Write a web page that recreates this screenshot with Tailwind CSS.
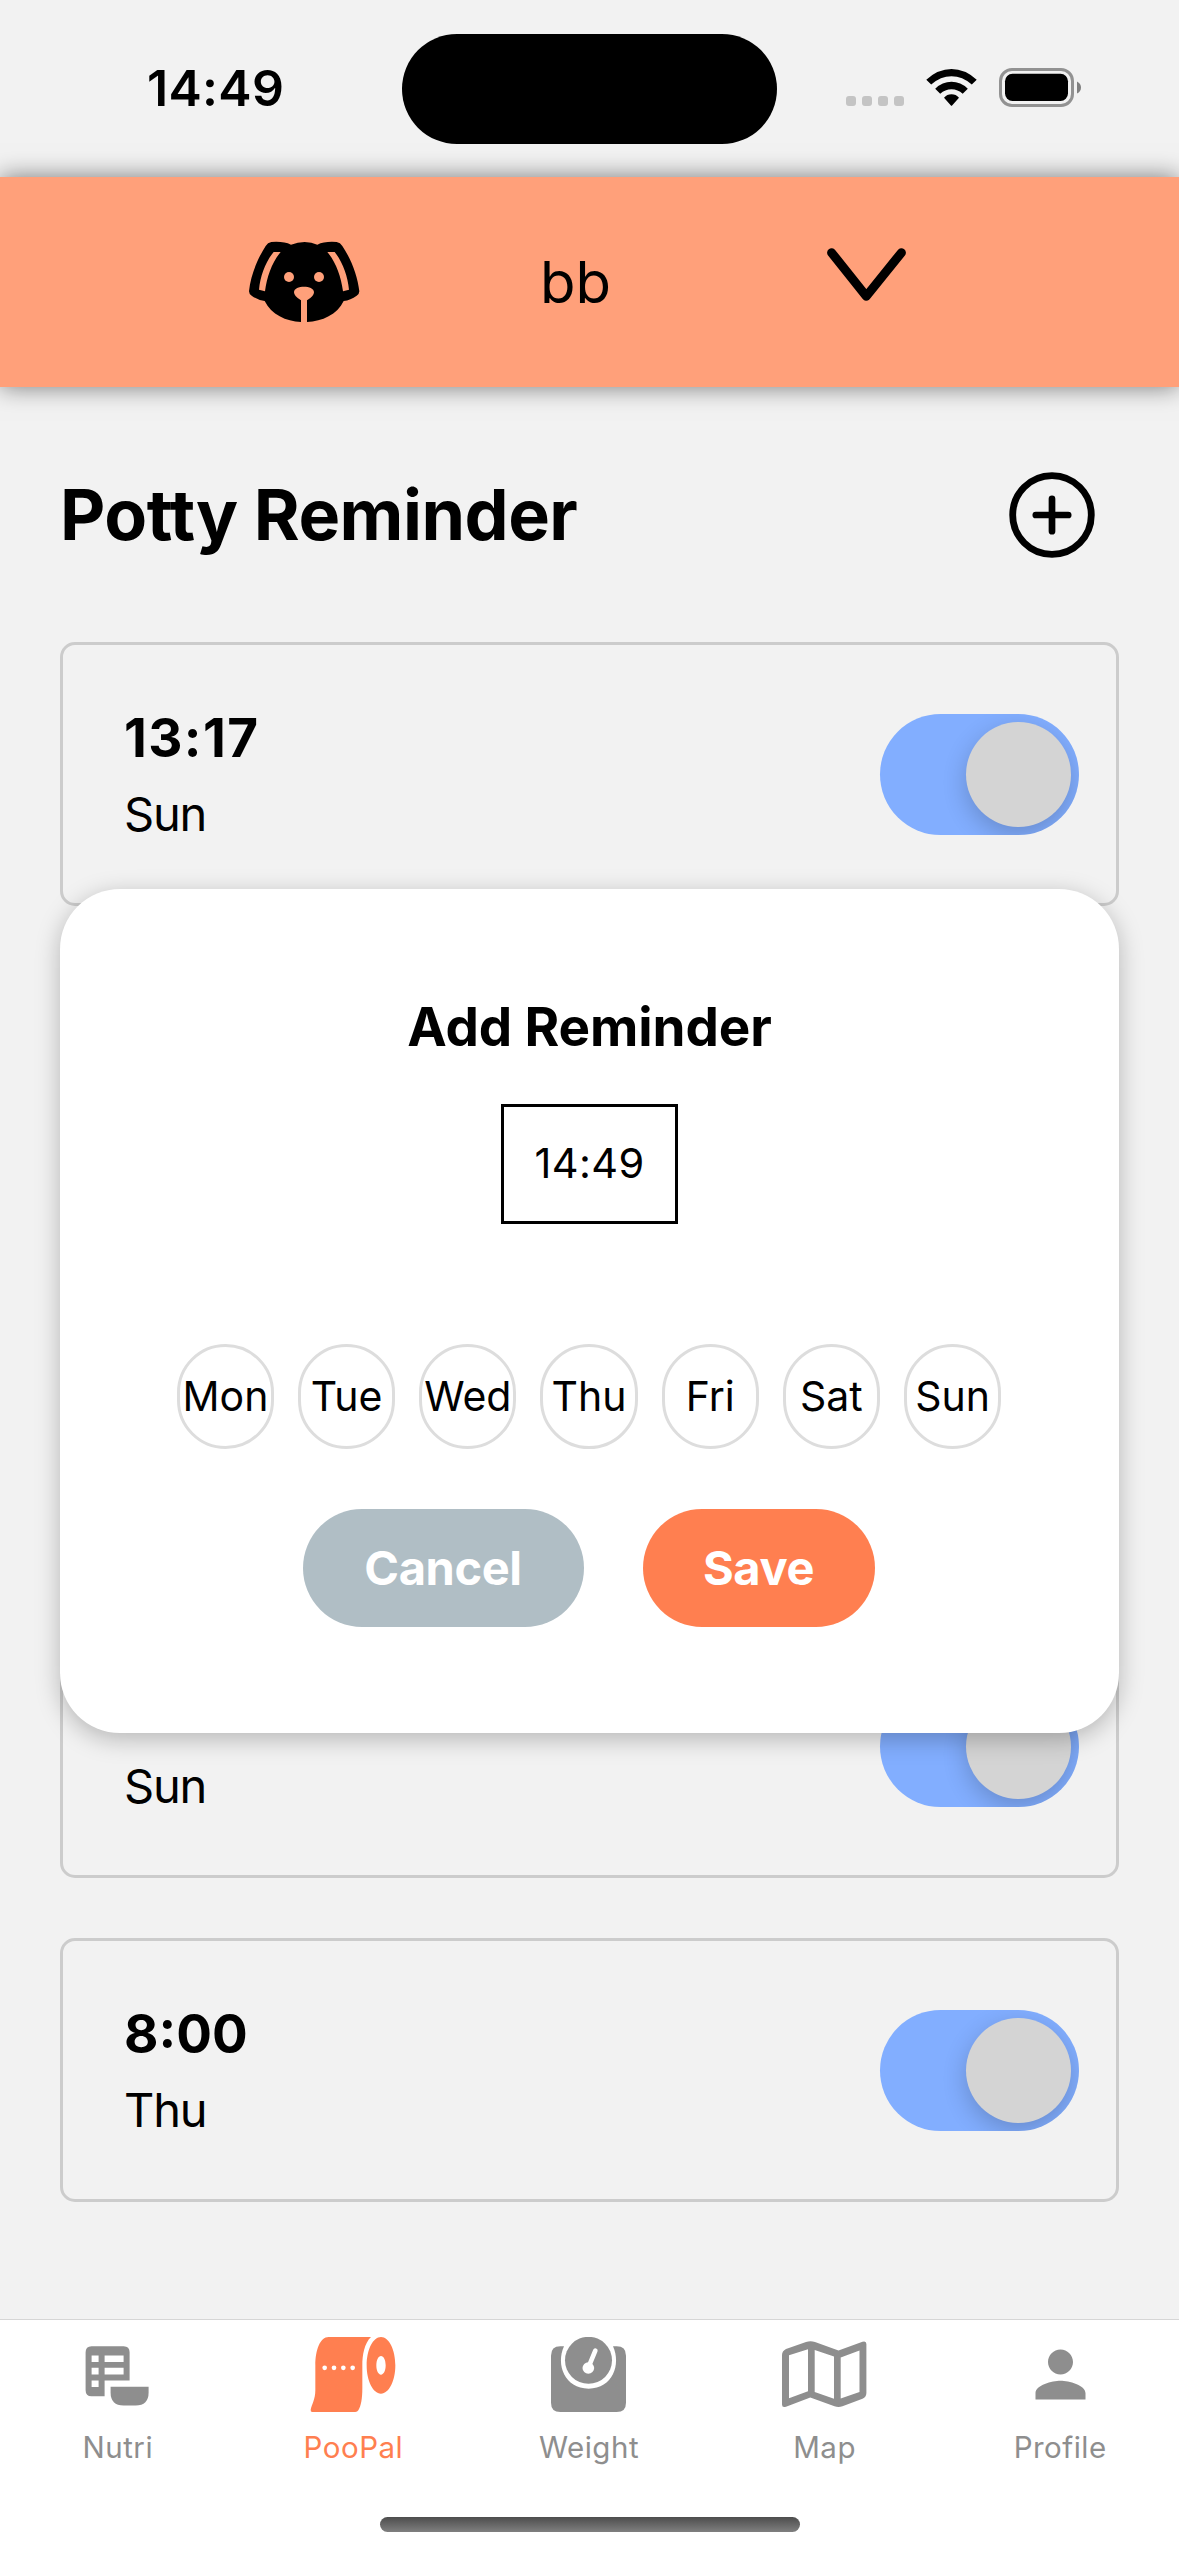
<!DOCTYPE html>
<html lang="en">
<head>
<meta charset="utf-8">
<title>Potty Reminder</title>
<script src="https://cdn.jsdelivr.net/npm/@tailwindcss/browser@4"></script>
</head>
<body class="bg-[#f2f2f2]">
<div class="relative flex h-[2556px] w-[1179px] flex-col overflow-hidden bg-[#f2f2f2] font-['Inter',sans-serif] text-black">

  <!-- Status bar -->
  <div class="flex h-[177px] shrink-0 items-start">
    <div class="ml-[147px] mt-[63px] w-[255px] text-[50px] leading-[50px] font-semibold tracking-[0.3px]">14:49</div>
    <div class="mt-[34px] h-[110px] w-[375px] rounded-full bg-black"></div>
    <svg class="ml-[69px] mt-[64px]" width="240" height="48" viewBox="846 64 240 48">
      <g fill="#c4c4c4"><rect x="846" y="96" width="10" height="10" rx="3"/><rect x="862" y="96" width="10" height="10" rx="3"/><rect x="878" y="96" width="10" height="10" rx="3"/><rect x="894" y="96" width="10" height="10" rx="3"/></g>
      <path d="M926.3 79.7Q938 69 951.500 69T976.700 79.700L971.800 84.600Q962.500 76.300 951.500 76.300T931.200 84.600Z"/>
      <path d="M935.200 88.700Q942.300 81.800 951.500 81.800T967.800 88.700L962.700 93.800Q957.900 89.200 951.500 89.200T940.200 93.800Z"/>
      <path d="M944 97.700Q947 94.300 951.500 94.300T959 97.700L952.300 105.300Q951.500 106.300 950.700 105.300Z"/>
      <rect x="1000.500" y="69.500" width="72" height="36" rx="11.500" fill="none" stroke="#929292" stroke-width="3"/>
      <rect x="1005" y="73.700" width="63" height="27.300" rx="7.500"/>
      <path d="M1077 81.500Q1081 83.500 1081 87.500T1077 93.500Z" fill="#808080"/>
    </svg>
  </div>

  <!-- Pet selector -->
  <div class="flex h-[210px] shrink-0 items-start bg-[#ffa07a] shadow-[0_0_23px_rgba(0,0,0,0.5)]">
    <svg class="ml-[230px] mt-[43px]" width="150" height="120" viewBox="0 0 450 360">
      <path d="M124 66Q160 63 183 74Q203 66 224 66T262 74Q285 63 320 66Q331 68 337 78C364 118 383 168 388 214Q388 222 380 227Q362 240 341 243C322 284 276 304 231 306V241Q252 229 252 217C252 195 192 195 192 217Q192 229 213 241V306C168 304 124 284 104 243Q82 240 65 227Q57 222 57 214C62 168 81 118 107 78Q113 68 124 66Z"/>
      <path fill="#ffa07a" d="M131 96H152C127 126 111 168 105 214L87 209C91 168 106 126 131 96ZM292 96H314C338 126 353 168 357 209L339 214C333 168 317 126 292 96Z"/>
      <circle cx="177" cy="171" r="15" fill="#ffa07a"/><circle cx="267" cy="171" r="15" fill="#ffa07a"/>
    </svg>
    <div class="ml-[160px] mt-[75px] w-[269px] text-[58px] leading-[60px]">bb</div>
    <svg class="ml-[10px] mt-[63px]" width="95" height="70" viewBox="819 240 95 70" fill="none" stroke="#000" stroke-width="9" stroke-linecap="round" stroke-linejoin="round">
      <path d="M831.600 252.700L866.300 296.300L901.400 252.700"/>
    </svg>
  </div>

  <!-- Title row -->
  <div class="mt-[85px] flex h-[85px] shrink-0 items-center justify-between pl-[60px] pr-[84px]">
    <h1 class="text-[70px] leading-[84px] font-bold tracking-[-0.5px]">Potty Reminder</h1>
    <svg width="86" height="86" viewBox="0 0 86 86" fill="none" stroke="#000" stroke-linecap="round">
      <circle cx="43" cy="43" r="39.300" stroke-width="6.800"/>
      <path d="M43 26.800V59.200M26.800 43H59.200" stroke-width="6.700"/>
    </svg>
  </div>

  <!-- Reminder list -->
  <div class="mt-[85px] flex flex-col gap-[60px] px-[60px]">
    <div class="flex h-[264px] items-center justify-between rounded-[15px] border-[3px] border-[#ccc] pl-[61px] pr-[37px]">
      <div class="flex flex-col gap-[25px]">
        <div class="text-[53px] leading-[54px] font-bold tracking-[1.4px]">13:17</div>
        <div class="text-[47px] leading-[48px] tracking-[-1.2px]">Sun</div>
      </div>
      <div class="flex h-[121px] w-[199px] items-center justify-end overflow-hidden rounded-full bg-[#82aeff] pr-[8px]">
        <div class="size-[105px] rounded-full bg-[#d4d4d4] shadow-[0_8px_24px_rgba(0,0,0,0.2)]"></div>
      </div>
    </div>
    <div class="h-[264px] rounded-[15px] border-[3px] border-[#ccc]"></div>
    <div class="h-[264px] rounded-[15px] border-[3px] border-[#ccc]"></div>
    <div class="flex h-[264px] items-center justify-between rounded-[15px] border-[3px] border-[#ccc] pl-[61px] pr-[37px]">
      <div class="pt-[79px] text-[47px] leading-[48px] tracking-[-1.2px]">Sun</div>
      <div class="flex h-[121px] w-[199px] items-center justify-end overflow-hidden rounded-full bg-[#82aeff] pr-[8px]">
        <div class="size-[105px] rounded-full bg-[#d4d4d4] shadow-[0_8px_24px_rgba(0,0,0,0.2)]"></div>
      </div>
    </div>
    <div class="flex h-[264px] items-center justify-between rounded-[15px] border-[3px] border-[#ccc] pl-[61px] pr-[37px]">
      <div class="flex flex-col gap-[25px]">
        <div class="text-[53px] leading-[54px] font-bold">8:00</div>
        <div class="text-[47px] leading-[48px] tracking-[-1.2px]">Thu</div>
      </div>
      <div class="flex h-[121px] w-[199px] items-center justify-end overflow-hidden rounded-full bg-[#82aeff] pr-[8px]">
        <div class="size-[105px] rounded-full bg-[#d4d4d4] shadow-[0_8px_24px_rgba(0,0,0,0.2)]"></div>
      </div>
    </div>
  </div>

  <!-- Tab bar -->
  <div class="mt-auto flex h-[237px] shrink-0 flex-col items-center border-t border-[#d6d6d6] bg-white text-[#8e8e8e]">
    <div class="grid w-full grid-cols-5 pt-[17px] pr-[1px] text-[29.5px] leading-[30px] tracking-[0.5px]">
      <div class="flex flex-col items-center gap-[20px]">
        <svg width="75" height="75" viewBox="80.400 2337.500 75 75" fill="currentColor">
          <path fill-rule="evenodd" d="M92 2346.700H124Q130 2346.700 130 2352.700V2381H105V2396.700H92Q86 2396.700 86 2390.700V2352.700Q86 2346.700 92 2346.700ZM92 2356V2362.500H99V2356ZM105 2356V2362.500H124V2356ZM92 2368.300V2375H99V2368.300ZM105 2368.300V2375H124V2368.300ZM92 2381V2387.500H99V2381Z"/>
          <path d="M111 2387.300H149V2393Q149 2406 136 2406H124Q111 2406 111 2393Z"/>
        </svg>
        <span>Nutri</span>
      </div>
      <div class="flex flex-col items-center gap-[20px] text-[#ff7f50]">
        <svg width="86" height="75" viewBox="62 51 258 225" fill="currentColor" class="overflow-visible">
          <path fill-rule="evenodd" d="M118 51H245C225 70 219 105 219 136V205C219 235 215 258 207 271Q204 276 198 276H69Q63 276 64 269C67 255 78 238 78 211V136C78 90 92 51 118 51Z"/>
          <path fill-rule="evenodd" d="M275 51C299 51 318 89 318 136S299 221 275 221S232 183 232 136S251 51 275 51ZM275 108C267 108 261 120 261 136S267 164 275 164S289 152 289 136S283 108 275 108Z"/>
          <g fill="#fff"><circle cx="106" cy="143.500" r="7"/><circle cx="134" cy="143.500" r="7"/><circle cx="162" cy="143.500" r="7"/><circle cx="190" cy="143.500" r="7"/></g>
        </svg>
        <span>PooPal</span>
      </div>
      <div class="flex flex-col items-center gap-[20px]">
        <svg width="75" height="75" viewBox="66 52 225 225" fill="currentColor">
          <path d="M94 80H105C80 135 107 207 179 207S277 135 252 80H263Q291 80 291 108V249Q291 277 263 277H94Q66 277 66 249V108Q66 80 94 80Z"/>
          <circle cx="178.500" cy="122" r="70.500"/>
          <path d="M199 93L182 134" fill="none" stroke="#fff" stroke-width="14" stroke-linecap="round"/>
          <circle cx="178" cy="145" r="17.500" fill="#fff"/>
        </svg>
        <span>Weight</span>
      </div>
      <div class="flex flex-col items-center gap-[20px]">
        <svg width="84.400" height="75" viewBox="782 2337.500 84.400 75" fill="currentColor">
          <path fill-rule="evenodd" d="M786 2349.500L806 2342.500Q810.500 2341 815 2342.500L838.500 2351L862.500 2342.200Q866.400 2341 866.400 2344.500V2393.500Q866.400 2397.500 862.500 2399.300L842.500 2406.700Q838.500 2408.300 834.500 2406.700L810.300 2398L786 2407.200Q782 2408.500 782 2405V2355.500Q782 2351.500 786 2349.500ZM789 2355.800V2398.700L808 2391.800V2349.800ZM814.700 2350.500V2392.500L834 2399.300V2357ZM840.700 2358V2399L859.500 2392.500V2351Z"/>
        </svg>
        <span>Map</span>
      </div>
      <div class="flex flex-col items-center gap-[20px]">
        <svg width="75" height="75" viewBox="0 0 24 24" fill="currentColor">
          <path d="M12 12c2.210 0 4-1.790 4-4s-1.790-4-4-4-4 1.790-4 4 1.790 4 4 4zm0 2c-2.670 0-8 1.340-8 4v2h16v-2c0-2.660-5.330-4-8-4z"/>
        </svg>
        <span>Profile</span>
      </div>
    </div>
    <div class="mt-[55px] h-[15px] w-[420px] rounded-full bg-linear-to-b from-[#4d4d4d] to-[#808080]"></div>
  </div>

  <!-- Add reminder dialog -->
  <div class="absolute top-[889px] left-[60px] flex h-[844px] w-[1059px] flex-col items-center rounded-[60px] bg-white pt-[108px] shadow-[0_6px_24px_rgba(0,0,0,0.25)]">
    <h2 class="text-[53px] leading-[60px] font-bold tracking-[-0.1px]">Add Reminder</h2>
    <div class="mt-[47px] flex h-[120px] w-[177px] items-center justify-center border-[3px] border-black pb-[2px] text-[41.5px] leading-[48px] tracking-[0.4px]">14:49</div>
    <div class="mt-[120px] flex gap-[24px] pr-[1px] text-[41px] leading-[48px]">
      <div class="flex h-[105px] w-[97.200px] items-center justify-center rounded-[60px] border-[3px] border-[#ddd] pb-[1px]">Mon</div>
      <div class="flex h-[105px] w-[97.200px] items-center justify-center rounded-[60px] border-[3px] border-[#ddd] pb-[1px]">Tue</div>
      <div class="flex h-[105px] w-[97.200px] items-center justify-center rounded-[60px] border-[3px] border-[#ddd] pb-[1px]">Wed</div>
      <div class="flex h-[105px] w-[97.200px] items-center justify-center rounded-[60px] border-[3px] border-[#ddd] pb-[1px]">Thu</div>
      <div class="flex h-[105px] w-[97.200px] items-center justify-center rounded-[60px] border-[3px] border-[#ddd] pb-[1px]">Fri</div>
      <div class="flex h-[105px] w-[97.200px] items-center justify-center rounded-[60px] border-[3px] border-[#ddd] pb-[1px]">Sat</div>
      <div class="flex h-[105px] w-[97.200px] items-center justify-center rounded-[60px] border-[3px] border-[#ddd] pb-[1px]">Sun</div>
    </div>
    <div class="mt-[60px] flex gap-[59px] pr-[2px] text-[47px] leading-[58px] font-bold tracking-[-0.4px] text-white">
      <div class="flex h-[118px] w-[281px] items-center justify-center rounded-full bg-[#b0bec5]">Cancel</div>
      <div class="flex h-[118px] w-[232px] items-center justify-center rounded-full bg-[#ff7f50]">Save</div>
    </div>
  </div>
</div>
</body>
</html>
